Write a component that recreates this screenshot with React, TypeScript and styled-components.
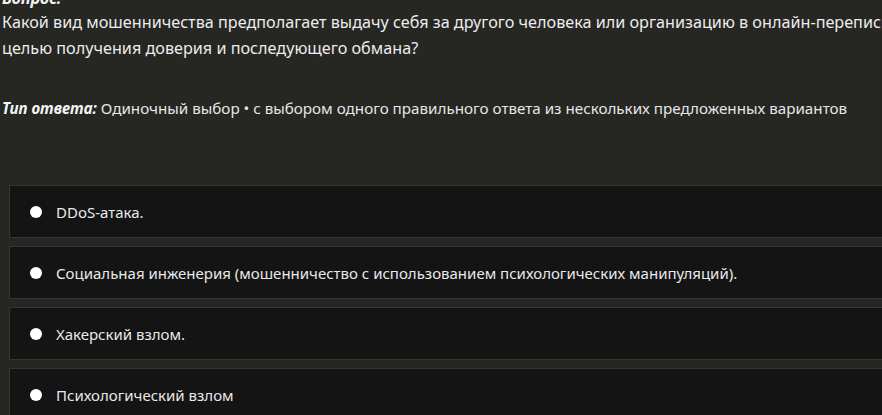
import React from "react";
import styled, { createGlobalStyle } from "styled-components";

const Global = createGlobalStyle`
  html, body {
    margin: 0;
    padding: 0;
    background: #262622;
    overflow: hidden;
  }
  body {
    font-family: "Noto Sans", "Open Sans", sans-serif;
    color: #ececec;
  }
`;

const Page = styled.div`
  width: 1100px;
  padding: 0 0 0 2px;
  margin-top: -13px;
  display: flex;
  flex-direction: column;
`;

const Label = styled.div`
  font-weight: 700;
  font-style: italic;
  font-size: 16px;
  line-height: 22px;
  color: #f2f2f2;
`;

const Question = styled.div`
  width: 945px;
  font-size: 16.2px;
  line-height: 26px;
  color: #ececec;
`;

const TypeLine = styled.div`
  margin-top: 36px;
  font-size: 15.2px;
  line-height: 22px;
  color: #e6e6e6;
`;

const TypeLabel = styled.span`
  font-weight: 700;
  font-style: italic;
  color: #f4f4f4;
`;

const Options = styled.div`
  margin-top: 66px;
  margin-left: 7px;
  display: flex;
  flex-direction: column;
  gap: 8px;
`;

const Option = styled.label`
  height: 53px;
  box-sizing: border-box;
  background: #141414;
  border: 1px solid #353532;
  display: flex;
  align-items: center;
  padding-left: 20px;
  gap: 14px;
  font-size: 15px;
  color: #e9e9e9;
`;

const Dot = styled.span`
  width: 12px;
  height: 12px;
  border-radius: 50%;
  background: #ffffff;
  flex: none;
`;

const options = [
  "DDoS-атака.",
  "Социальная инженерия (мошенничество с использованием психологических манипуляций).",
  "Хакерский взлом.",
  "Психологический взлом",
];

export default function App() {
  return (
    <>
      <Global />
      <Page>
        <Label>Вопрос:</Label>
        <Question>
          Какой вид мошенничества предполагает выдачу себя за другого человека или
          организацию в онлайн‑переписке с целью получения доверия и последующего обмана?
        </Question>
        <TypeLine>
          <TypeLabel>Тип ответа:</TypeLabel> Одиночный выбор • с выбором одного
          правильного ответа из нескольких предложенных вариантов
        </TypeLine>
        <Options>
          {options.map((o) => (
            <Option key={o}>
              <Dot />
              {o}
            </Option>
          ))}
        </Options>
      </Page>
    </>
  );
}
